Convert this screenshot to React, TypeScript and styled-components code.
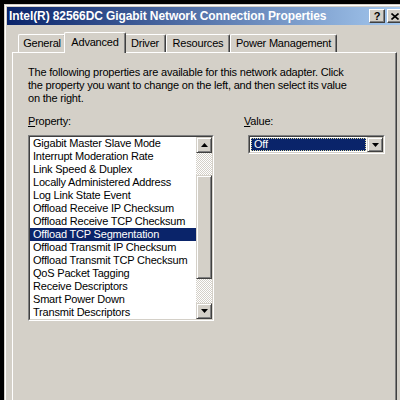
import React from 'react';
import styled, { createGlobalStyle } from 'styled-components';

const FACE = '#D4D0C8';
const NAVY = '#0A246A';

const GlobalStyle = createGlobalStyle`
    html, body {
        margin: 0;
        padding: 0;
        height: 400px;
        overflow: hidden;
        background: #000;
    }
    body {
        font-family: 'Liberation Sans', Arial, sans-serif;
        font-size: 11px;
        letter-spacing: -0.2px;
        color: #000;
    }
`;

// the dialog continues below the visible 400px, so it has no bottom edge here
const WindowFrame = styled.div`
    box-sizing: border-box;
    width: 404px;
    height: 396px;
    margin: 4px 0 0 4px;
    padding: 2px 2px 0;
    display: flex;
    flex-direction: column;
    background: ${FACE};
    border: 1px solid;
    border-bottom: 0;
    border-color: ${FACE} #404040 #404040 ${FACE};
    box-shadow: inset 1px 1px #fff, inset -1px 0 #808080;
`;

const TitleBar = styled.div`
    height: 18px;
    display: flex;
    align-items: center;
    padding: 0 2px;
    background: linear-gradient(to right, ${NAVY}, #A6CAF0);
`;

const TitleText = styled.span`
    flex: 1;
    color: #fff;
    font-weight: bold;
    font-size: 12px;
    letter-spacing: -0.1px;
    white-space: nowrap;
`;

const TitleButton = styled.div`
    box-sizing: border-box;
    width: 16px;
    height: 14px;
    margin-left: 2px;
    display: flex;
    align-items: center;
    justify-content: center;
    background: ${FACE};
    border: 1px solid;
    border-color: #fff #404040 #404040 #fff;
    box-shadow: inset -1px -1px #808080;
    font-weight: bold;
    font-size: 11px;
    letter-spacing: 0;
    line-height: 1;
`;

const TabStrip = styled.div`
    display: flex;
    align-items: flex-end;
    height: 20px;
    margin: 7px 0 0 5px;
    padding-left: 6px;
`;

const Tab = styled.div<{ $w: number; $active?: boolean }>`
    position: relative;
    box-sizing: border-box;
    width: ${(p) => p.$w}px;
    height: ${(p) => (p.$active ? 21 : 18)}px;
    margin: 0 ${(p) => (p.$active ? -2 : 0)}px ${(p) => (p.$active ? -1 : 0)}px;
    z-index: ${(p) => (p.$active ? 1 : 0)};
    padding-top: ${(p) => (p.$active ? 3 : 2)}px;
    text-align: center;
    white-space: nowrap;
    background: ${FACE};
    border-top: 1px solid #fff;
    border-left: 1px solid #fff;
    border-right: 1px solid #404040;
    border-top-left-radius: 2px;
    border-top-right-radius: 2px;
    box-shadow: inset -1px 0 #808080;
`;

const Panel = styled.div`
    flex: 1;
    width: 385px;
    box-sizing: border-box;
    margin-left: 5px;
    padding: 13px 0 0 15px;
    border-top: 1px solid #fff;
    border-left: 1px solid #fff;
    border-right: 1px solid #404040;
    box-shadow: inset -1px 0 #808080;
`;

const Description = styled.p`
    margin: 0;
    line-height: 13px;
    white-space: nowrap;
`;

const Columns = styled.div`
    display: flex;
    gap: 30px;
    margin-top: 10px;
`;

const Column = styled.div`
    display: flex;
    flex-direction: column;
`;

const Label = styled.div`
    line-height: 13px;
    margin-bottom: 7px;

    u {
        text-decoration: underline;
        text-underline-offset: 1px;
    }
`;

const Sunken = styled.div`
    box-sizing: border-box;
    border: 1px solid;
    border-color: #808080 #fff #fff #808080;
`;

const SunkenInner = styled.div`
    box-sizing: border-box;
    height: 100%;
    display: flex;
    border: 1px solid;
    border-color: #404040 ${FACE} ${FACE} #404040;
    background: #fff;
`;

const ListBox = styled(Sunken)`
    width: 186px;
    height: 186px;
`;

const Items = styled.div`
    flex: 1;
    overflow: hidden;
`;

const Item = styled.div<{ $selected?: boolean }>`
    height: 13px;
    line-height: 13px;
    padding-left: 3px;
    white-space: nowrap;
    background: ${(p) => (p.$selected ? NAVY : 'transparent')};
    color: ${(p) => (p.$selected ? '#fff' : '#000')};
`;

const ScrollBar = styled.div`
    width: 16px;
    display: flex;
    flex-direction: column;
    background: repeating-conic-gradient(${FACE} 0 25%, #fff 0 50%) 0 0 / 2px 2px;
`;

const Raised = styled.div`
    box-sizing: border-box;
    background: ${FACE};
    border: 1px solid;
    border-color: ${FACE} #404040 #404040 ${FACE};
    box-shadow: inset 1px 1px #fff, inset -1px -1px #808080;
    display: flex;
    align-items: center;
    justify-content: center;
`;

const ScrollButton = styled(Raised)`
    width: 16px;
    height: 16px;
`;

const Thumb = styled(Raised)`
    width: 16px;
    height: 104px;
    margin-top: 22px;
`;

const Spacer = styled.div`
    flex: 1;
`;

const Combo = styled(Sunken)`
    width: 137px;
    height: 19px;
    margin-left: 4px;
`;

const ComboValue = styled.div`
    flex: 1;
    margin: 1px;
    padding-left: 2px;
    line-height: 11px;
    background: ${NAVY};
    color: #fff;
    border: 1px dotted #D8D49A;
`;

const ComboButton = styled(Raised)`
    width: 16px;
`;

const Arrow: React.FC<{ up?: boolean }> = ({ up }) => (
    <svg width="7" height="4" viewBox="0 0 7 4">
        <path d={up ? 'M3.5 0 L7 4 L0 4 Z' : 'M0 0 L7 0 L3.5 4 Z'} fill="#000" />
    </svg>
);

const CloseGlyph: React.FC = () => (
    <svg width="8" height="7" viewBox="0 0 8 7">
        <path d="M0.5 0.5 L7.5 6.5 M7.5 0.5 L0.5 6.5" stroke="#000" strokeWidth="1.6" />
    </svg>
);

const properties = [
    'Gigabit Master Slave Mode',
    'Interrupt Moderation Rate',
    'Link Speed & Duplex',
    'Locally Administered Address',
    'Log Link State Event',
    'Offload Receive IP Checksum',
    'Offload Receive TCP Checksum',
    'Offload TCP Segmentation',
    'Offload Transmit IP Checksum',
    'Offload Transmit TCP Checksum',
    'QoS Packet Tagging',
    'Receive Descriptors',
    'Smart Power Down',
    'Transmit Descriptors',
];

const tabs = [
    { name: 'General', w: 48 },
    { name: 'Advanced', w: 62, active: true },
    { name: 'Driver', w: 42 },
    { name: 'Resources', w: 64 },
    { name: 'Power Management', w: 107 },
];

const App: React.FC = () => {
    return (
        <>
            <GlobalStyle />
            <WindowFrame>
                <TitleBar>
                    <TitleText>Intel(R) 82566DC Gigabit Network Connection Properties</TitleText>
                    <TitleButton>?</TitleButton>
                    <TitleButton>
                        <CloseGlyph />
                    </TitleButton>
                </TitleBar>

                <TabStrip>
                    {tabs.map((t) => (
                        <Tab key={t.name} $w={t.w} $active={t.active}>
                            {t.name}
                        </Tab>
                    ))}
                </TabStrip>

                <Panel>
                    <Description>
                        The following properties are available for this network adapter. Click
                        <br />
                        the property you want to change on the left, and then select its value
                        <br />
                        on the right.
                    </Description>

                    <Columns>
                        <Column>
                            <Label>
                                <u>P</u>roperty:
                            </Label>
                            <ListBox>
                                <SunkenInner>
                                    <Items>
                                        {properties.map((p) => (
                                            <Item key={p} $selected={p === 'Offload TCP Segmentation'}>
                                                {p}
                                            </Item>
                                        ))}
                                    </Items>
                                    <ScrollBar>
                                        <ScrollButton>
                                            <Arrow up />
                                        </ScrollButton>
                                        <Thumb />
                                        <Spacer />
                                        <ScrollButton>
                                            <Arrow />
                                        </ScrollButton>
                                    </ScrollBar>
                                </SunkenInner>
                            </ListBox>
                        </Column>

                        <Column>
                            <Label>
                                <u>V</u>alue:
                            </Label>
                            <Combo>
                                <SunkenInner>
                                    <ComboValue>Off</ComboValue>
                                    <ComboButton>
                                        <Arrow />
                                    </ComboButton>
                                </SunkenInner>
                            </Combo>
                        </Column>
                    </Columns>
                </Panel>
            </WindowFrame>
        </>
    );
};

export default App;
